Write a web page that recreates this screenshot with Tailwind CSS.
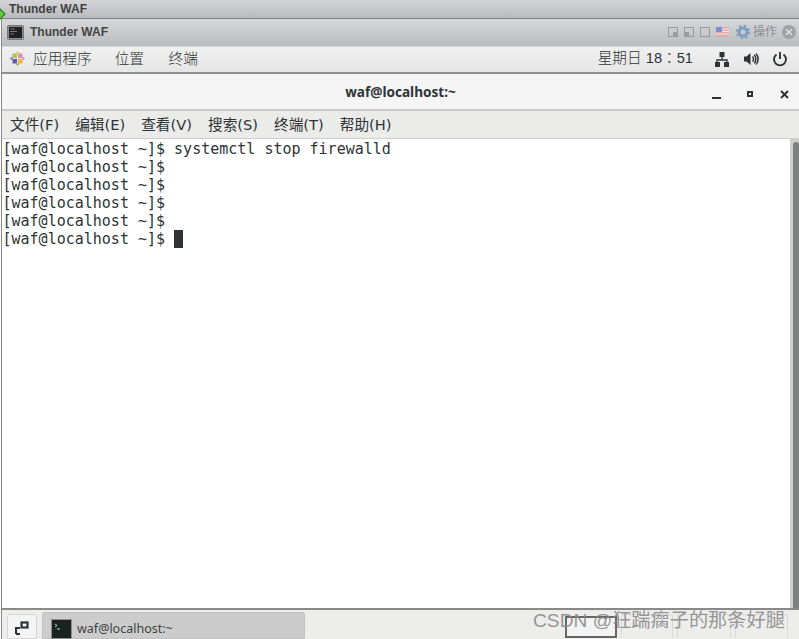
<!DOCTYPE html>
<html><head><meta charset="utf-8"><script src="https://cdn.jsdelivr.net/npm/@tailwindcss/browser@4"></script></head>
<body class="m-0 overflow-hidden bg-white">
<div class="relative w-[799px] h-[639px] flex flex-col overflow-hidden font-['Liberation_Sans','Noto_Sans_CJK_SC',sans-serif]">
  <!-- outer bar -->
  <div class="relative h-[19px] shrink-0 bg-gradient-to-b from-[#d4d5d8] to-[#b9babd] border-b border-[#7c7d7f] flex items-center pl-[9px]">
    <span class="text-[12px] font-bold text-[#333] leading-none opacity-90">Thunder WAF</span>
    <span class="absolute left-[-4px] top-[10px] w-[8px] h-[8px] rotate-45 bg-[#5fd038] border border-[#2d6b1a]"></span>
  </div>
  <div class="flex-1 flex flex-col ml-[1px] border-l border-[#8a8a8a] min-h-0">
    <!-- VM title -->
    <div class="h-[27px] shrink-0 bg-gradient-to-b from-[#d6d7da] to-[#bbbcbf] flex items-center pl-[5px] pr-[3px]">
      <svg width="17" height="15" viewBox="0 0 17 15" class="shrink-0"><rect x="0.5" y="0.5" width="16" height="14" rx="1" fill="#8d8d8d" stroke="#777"/><rect x="2" y="2" width="13" height="11" fill="#1f1f1f"/><path d="M3 4h5M3 6.500h7M3 9h4" stroke="#777" stroke-width="1"/></svg>
      <span class="ml-[6px] text-[12px] font-bold text-[#444] -mt-[2px]">Thunder WAF</span>
      <div class="ml-auto flex items-center -mt-[2px]">
        <svg width="84" height="16" viewBox="0 0 84 16" class="mr-[1px]">
          <g fill="none" stroke="#9a9b9e"><rect x="0.500" y="3.500" width="9" height="9"/><rect x="16.500" y="3.500" width="9" height="9"/><rect x="32.500" y="3.500" width="9" height="9"/></g>
          <rect x="5" y="8" width="5" height="5" fill="#9a9b9e"/><rect x="17" y="8" width="4" height="4" fill="#9a9b9e"/>
          <rect x="48" y="3" width="13" height="10" fill="#e0a8a8"/><path d="M48 5h13M48 7.500h13M48 10h13" stroke="#f3eeee"/><rect x="48" y="3" width="6" height="5" fill="#7e8fcc"/>
          <g transform="translate(75 8)"><circle r="4" fill="none" stroke="#7f9fc2" stroke-width="3"/><circle r="6.200" fill="none" stroke="#7f9fc2" stroke-width="2" stroke-dasharray="2.400 2.470"/></g>
        </svg>
        <span class="text-[12px] text-[#8d8e91] leading-none">操作</span>
        <span class="ml-[5px] w-[14px] h-[14px] rounded-full bg-[#a0a1a4] flex items-center justify-center">
          <svg width="8" height="8" viewBox="0 0 8 8"><path d="M1 1l6 6M7 1l-6 6" stroke="#dfdfe0" stroke-width="1.600"/></svg>
        </span>
      </div>
    </div>
    <!-- top panel -->
    <div class="h-[28px] shrink-0 bg-gradient-to-b from-[#f0f0f0] to-[#e6e6e6] border-t border-[#d8d8d8] border-b-2 border-b-[#8f8f8f] flex items-center text-[14.670px] text-[#2e3436] pl-[8px] font-light">
      <svg width="15" height="15" viewBox="0 0 15 15" class="shrink-0 -mt-[2px]">
        <rect x="2.500" y="2.500" width="4.500" height="4.500" fill="#a6c56a"/><rect x="8" y="2.500" width="4.500" height="4.500" fill="#d98fb8"/><rect x="8" y="8" width="4.500" height="4.500" fill="#f0b548"/><rect x="2.500" y="8" width="4.500" height="4.500" fill="#5a5ab0"/>
        <path d="M7.500 0l2 2.500h-4z" fill="#e8c24f"/><path d="M15 7.500l-2.500 2v-4z" fill="#c98bb0"/><path d="M7.500 15l-2-2.500h4z" fill="#8fb060"/><path d="M0 7.500l2.500-2v4z" fill="#a050a0"/>
      </svg>
      <span class="ml-[8px] -mt-[2px]">应用程序</span>
      <span class="ml-[23px] -mt-[2px]">位置</span>
      <span class="ml-[24.500px] -mt-[2px]">终端</span>
      <span class="ml-auto -mt-[3px] font-['Liberation_Sans','Noto_Sans_CJK_TC',sans-serif]">星期日 18：51</span>
      <div class="ml-[21px] mr-[11px] flex items-center gap-[13px] -mt-[2px]">
        <svg width="16" height="16" viewBox="0 0 16 16"><path d="M8 5v4M3 12V9h10v3" fill="none" stroke="#2e3436" stroke-width="1.300"/><rect x="5.500" y="1" width="5" height="5" fill="#2e3436"/><rect x="1" y="11" width="5" height="5" fill="#2e3436"/><rect x="10" y="11" width="5" height="5" fill="#2e3436"/></svg>
        <svg width="16" height="16" viewBox="0 0 16 16"><path d="M1 5.500h2.500L7.500 2v12L3.500 10.500H1z" fill="#2e3436"/><path d="M9.500 5.500a3.500 3.500 0 0 1 0 5M11.200 3.800a6 6 0 0 1 0 8.400M13 2.500a8 8 0 0 1 0 11" fill="none" stroke="#2e3436" stroke-width="1.500"/></svg>
        <svg width="16" height="16" viewBox="0 0 16 16"><path d="M4.500 3.500a6 6 0 1 0 7 0" fill="none" stroke="#2e3436" stroke-width="1.900"/><path d="M8 1v7" stroke="#2e3436" stroke-width="1.900"/></svg>
      </div>
    </div>
    <!-- terminal title -->
    <div class="relative h-[37px] shrink-0 bg-[#f5f5f5] border-b-2 border-[#c9c9c7] flex items-center justify-center">
      <span class="text-[13.600px] font-bold text-[#2e3436] font-['Noto_Sans',sans-serif] mt-[1px]">waf@localhost:~</span>
      <div class="absolute right-[10px] top-[15px] flex items-center">
        <span class="w-[9px] h-[2px] mt-[8px] bg-[#2e3436]"></span>
        <span class="ml-[26px] w-[6px] h-[6px] border-2 border-[#2e3436]"></span>
        <svg width="9" height="9" viewBox="0 0 9 9" class="ml-[27px]"><path d="M1 1l7 7M8 1L1 8" stroke="#2e3436" stroke-width="2"/></svg>
      </div>
    </div>
    <!-- menu -->
    <div class="h-[28px] shrink-0 bg-[#ebebe9] border-b border-[#cfcfcd] flex items-center gap-[16px] pl-[8px] text-[14.670px] text-[#2e3436] font-['DejaVu_Sans','Noto_Sans_CJK_SC',sans-serif]">
      <span>文件(F)</span><span>编辑(E)</span><span>查看(V)</span><span>搜索(S)</span><span>终端(T)</span><span>帮助(H)</span>
    </div>
    <!-- terminal -->
    <div class="relative flex-1 min-h-0 bg-white pt-[1px] pl-[0.500px] text-[15px] leading-[18px] text-[#2e3436] font-['DejaVu_Sans_Mono',monospace]">
      <div class="h-[18px] whitespace-pre">[waf@localhost ~]$ systemctl stop firewalld</div>
      <div class="h-[18px] whitespace-pre">[waf@localhost ~]$ </div>
      <div class="h-[18px] whitespace-pre">[waf@localhost ~]$ </div>
      <div class="h-[18px] whitespace-pre">[waf@localhost ~]$ </div>
      <div class="h-[18px] whitespace-pre">[waf@localhost ~]$ </div>
      <div class="h-[18px] flex whitespace-pre">[waf@localhost ~]$ <span class="w-[9px] h-[18px] bg-[#2e3436]"></span></div>
      <div class="absolute right-0 top-0 bottom-0 w-[9px] bg-[#cfcfce] flex justify-end">
        <span class="w-[6px] mt-[3px] rounded-t-full bg-[#7e8182]"></span>
      </div>
    </div>
    <!-- bottom panel -->
    <div class="relative h-[31px] shrink-0 bg-[#ededec] border-t-2 border-[#8a8a8a] flex items-end pl-[5px]">
      <div class="w-[30px] h-[25px] bg-[#f4f4f4] border border-[#d6d6d6] rounded-t-[3px] flex items-center justify-center pt-[3px]">
        <svg width="14" height="14" viewBox="0 0 14 14"><rect x="6.500" y="1.500" width="6" height="5" fill="none" stroke="#2e3436" stroke-width="2.200"/><path d="M1 13V7h4M1 13h4" fill="none" stroke="#2e3436" stroke-width="2.200"/></svg>
      </div>
      <div class="ml-[5px] w-[263px] h-[27px] bg-[#cccccc] border border-[#c2c2c2] rounded-t-[3px] flex items-center pl-[8px] pt-[7px]">
        <svg width="21" height="20" viewBox="0 0 21 20" class="shrink-0"><rect x="0.500" y="0.500" width="20" height="19" fill="#192320" stroke="#8f8f8f"/><path d="M4 5l2 1.500L4 8M6 10h3" stroke="#c8d0cc" fill="none"/></svg>
        <span class="ml-[5px] text-[12.500px] text-[#3f4446] font-['Noto_Sans',sans-serif]">waf@localhost:~</span>
      </div>
      <div class="absolute left-[563px] top-[4px] flex items-end h-[24px]">
        <span class="w-[52px] h-[22px] bg-[#f3f3f3] border-2 border-[#666]"></span>
        <span class="ml-[4px] w-[52px] h-[24px] border border-b-0 border-[#d8d8d8] rounded-t-[3px]"></span>
        <span class="ml-[4px] w-[54px] h-[24px] border border-b-0 border-[#d8d8d8] rounded-t-[3px]"></span>
        <span class="ml-[4px] w-[53px] h-[24px] border border-b-0 border-[#d8d8d8] rounded-t-[3px]"></span>
      </div>
      <div class="absolute left-[531px] -top-[2px] text-[19.200px] leading-[26px] text-[#8a8a8a]/90 whitespace-nowrap">CSDN @狂踹瘸子的那条好腿</div>
    </div>
  </div>
</div>
</body></html>
